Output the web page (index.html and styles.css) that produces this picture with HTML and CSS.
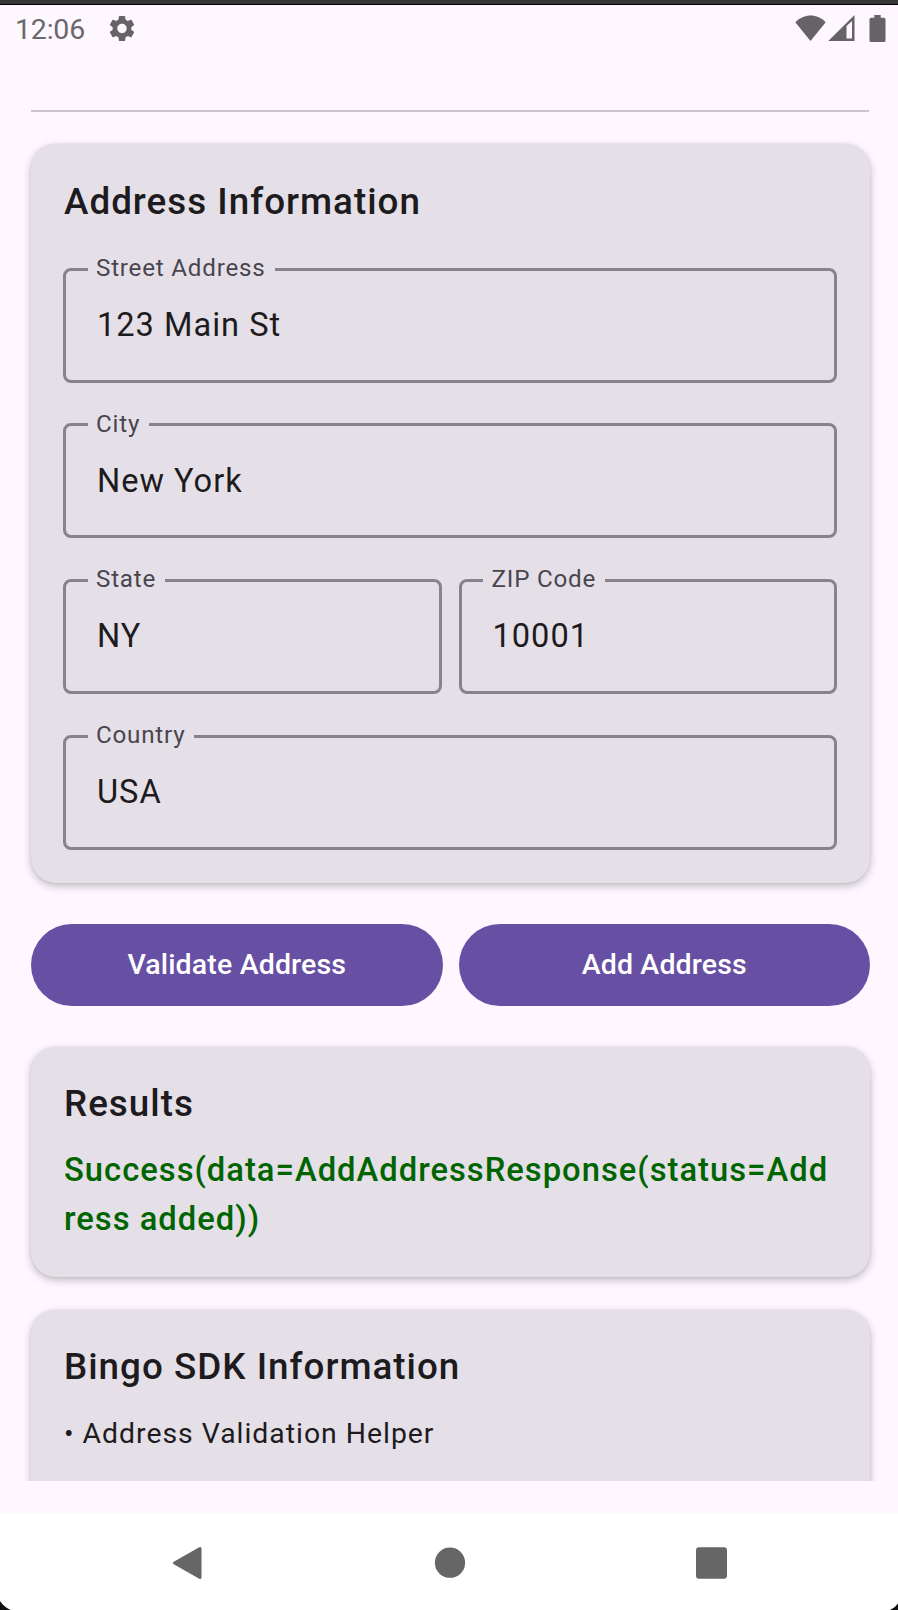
FILE: index.html
```html
<!DOCTYPE html>
<html lang="en">
<head>
<meta charset="utf-8">
<title>Address Information</title>
<link rel="stylesheet" href="styles.css">
</head>
<body>
<div class="phone">
  <header class="status">
    <span class="time">12:06</span>
    <svg class="gear" viewBox="2 2 20 20"><path d="M19.14 12.94c.04-.3.06-.61.06-.94 0-.32-.02-.64-.07-.94l2.03-1.58c.18-.14.23-.41.12-.61l-1.92-3.32c-.12-.22-.37-.29-.59-.22l-2.39.96c-.5-.38-1.03-.7-1.62-.94l-.36-2.54c-.04-.24-.24-.41-.48-.41h-3.84c-.24 0-.43.17-.47.41l-.36 2.54c-.59.24-1.13.57-1.62.94l-2.39-.96c-.22-.08-.47 0-.59.22L2.74 8.87c-.12.21-.08.47.12.61l2.03 1.58c-.05.3-.09.63-.09.94s.02.64.07.94l-2.03 1.58c-.18.14-.23.41-.12.61l1.92 3.32c.12.22.37.29.59.22l2.39-.96c.5.38 1.03.7 1.62.94l.36 2.54c.05.24.24.41.48.41h3.84c.24 0 .44-.17.47-.41l.36-2.54c.59-.24 1.13-.56 1.62-.94l2.39.96c.22.08.47 0 .59-.22l1.92-3.32c.12-.22.07-.47-.12-.61l-2.01-1.58zM12 15.6c-1.98 0-3.6-1.62-3.6-3.6s1.62-3.6 3.6-3.6 3.6 1.62 3.6 3.6-1.62 3.6-3.6 3.6z"/></svg>
    <svg class="signals" width="92" height="28" viewBox="0 0 92 28">
      <path d="M0.3 7.3C8.800 -1.700 22.500 -1.700 30.700 7.300L15.500 26Z"/>
      <path fill-rule="evenodd" d="M33.300 26L59.500 0V26ZM51.500 11V23.600H57V6Z"/>
      <path d="M79.300 0H85.700V2.700H89Q90.500 2.700 90.500 4.200V25.500Q90.500 27 89 27H76Q74.500 27 74.500 25.500V4.200Q74.500 2.700 76 2.700H79.300Z"/>
    </svg>
  </header>

  <main class="content">
    <div class="divider"></div>
    <section class="card card-form">
      <h2 class="title">Address Information</h2>
      <div class="fields">
        <fieldset class="field"><legend>Street Address</legend><div class="value">123 Main St</div></fieldset>
        <fieldset class="field"><legend>City</legend><div class="value">New York</div></fieldset>
        <div class="pair">
          <fieldset class="field"><legend>State</legend><div class="value">NY</div></fieldset>
          <fieldset class="field"><legend>ZIP Code</legend><div class="value">10001</div></fieldset>
        </div>
        <fieldset class="field"><legend>Country</legend><div class="value">USA</div></fieldset>
      </div>
    </section>
    <div class="actions">
      <button class="button">Validate Address</button>
      <button class="button">Add Address</button>
    </div>
    <section class="card card-results">
      <h2 class="title">Results</h2>
      <p class="result">Success(data=AddAddressResponse(status=Address added))</p>
    </section>
    <section class="card card-info">
      <h2 class="title">Bingo SDK Information</h2>
      <p class="bullet">• Address Validation Helper</p>
    </section>
  </main>

  <nav class="navbar">
    <svg width="898" height="97" viewBox="0 0 898 97">
      <path class="back" d="M174.500 50L200 35.500V64.500Z"/>
      <circle cx="450" cy="49.700" r="15.100"/>
      <rect x="696" y="34.300" width="31" height="31.500" rx="3"/>
      <path class="corner" d="M0 88Q4 94 10.500 97H0ZM898 90.500Q895 95 890 97H898Z"/>
    </svg>
  </nav>
</div>
</body>
</html>
```
FILE: styles.css
```css
* { box-sizing: border-box; }

body {
  margin: 0;
  font-family: Roboto, "Liberation Sans", sans-serif;
  color: #1d1b20;
  background: #fef7ff;
}

.phone {
  display: flex;
  flex-direction: column;
  width: 898px;
  height: 1610px;
  overflow: hidden;
  background: #fef7ff;
  border-top: 4px solid #363636;
}

.status {
  display: flex;
  flex: none;
  height: 66px;
  padding: 0 11px 0 15px;
  border-top: 1px solid #000;
  fill: #666366;
}

.time {
  width: 94px;
  padding-top: 8px;
  font-size: 28.500px;
  line-height: 34px;
  letter-spacing: -0.2px;
  color: #6b686b;
}

.gear { width: 26px; height: 27px; margin-top: 10px; }
.signals { margin: 10px 0 0 auto; }

.content {
  flex: none;
  height: 1411px;
  padding: 40px 28px 0 31px;
  overflow: hidden;
}

.divider { height: 2px; margin: 0 1px 32px 0; background: #cac4d0; }

.card {
  padding: 33px;
  border-radius: 25px;
  background: #e5e0e7;
  box-shadow: 0 3px 9px rgba(0, 0, 0, 0.25), 0 0 3px rgba(0, 0, 0, 0.08);
}

.card-form { height: 738.600px; margin-bottom: 41px; padding-top: 34px; }
.card-results { height: 230px; margin-bottom: 33px; }
.card-info { height: 260px; }

.title {
  margin: 0;
  font-size: 36.800px;
  font-weight: 500;
  line-height: 48px;
  letter-spacing: 1px;
}

.fields {
  display: flex;
  flex-direction: column;
  gap: 28.100px;
  margin: 29px 0 0 -1px;
}

.pair { display: flex; gap: 17px; }
.pair .field { flex: 1; }

.field {
  min-width: 0;
  height: 127.6px;
  margin: 0;
  padding: 0 31px;
  border: 3px solid #88828b;
  border-radius: 8px;
}

.field legend {
  margin-left: -9.300px;
  padding: 0 9px 2px 8.300px;
  font-size: 24.200px;
  line-height: 26px;
  letter-spacing: 0.78px;
  color: #49454f;
}

.value {
  padding-top: 17px;
  font-size: 32.600px;
  line-height: 50px;
  letter-spacing: 1px;
}

.actions { display: flex; gap: 16px; margin-bottom: 41px; }

.button {
  flex: 1;
  height: 82px;
  padding: 0;
  border: 0;
  border-radius: 41px;
  background: #6750a4;
  color: #fff;
  font: 500 28.500px Roboto, "Liberation Sans", sans-serif;
  letter-spacing: 0.15px;
}

.result {
  margin: 18px 0 0;
  font-size: 32.750px;
  font-weight: 500;
  line-height: 49.400px;
  letter-spacing: 1px;
  word-break: break-all;
  color: #006400;
}

.bullet {
  margin: 18px 0 0;
  font-size: 28.400px;
  line-height: 49.400px;
  letter-spacing: 0.98px;
}

.navbar { flex: none; margin-top: 32px; height: 97px; background: #fff; fill: #666; }
.navbar svg { display: block; }
.back { stroke: #666; stroke-width: 3px; stroke-linejoin: round; }
.corner { fill: #111; }
```
